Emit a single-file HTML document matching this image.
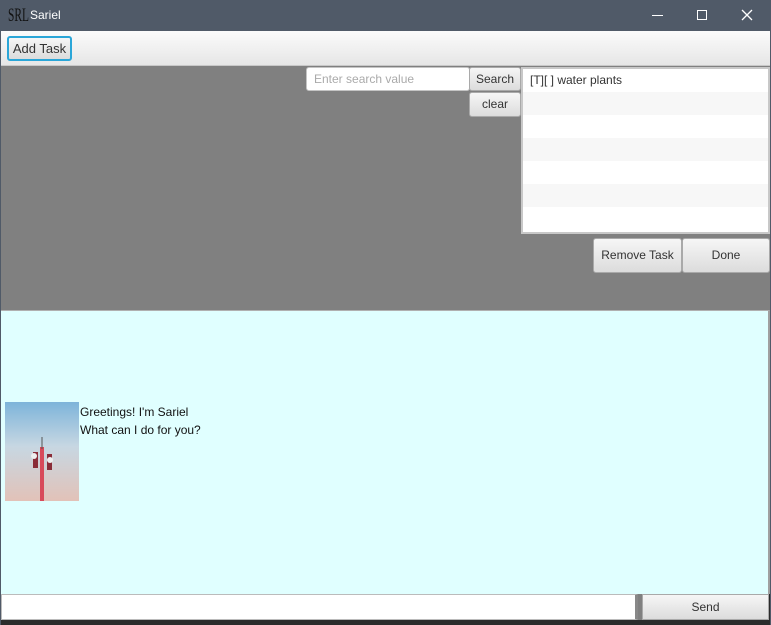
<!DOCTYPE html>
<html><head><style>
*{margin:0;padding:0;box-sizing:border-box}
body{width:771px;height:625px;overflow:hidden;background:#2b2b2b;font-family:"Liberation Sans",sans-serif;font-size:12px;color:#333;position:relative}
.a{position:absolute}
.btn{position:absolute;background:linear-gradient(#f6f6f6,#dcdcdc);border:1px solid #a9a9a9;border-radius:3px;text-align:center;color:#333;font-size:12px}
</style></head><body>
<div class="a" style="left:0;top:0;width:771px;height:31px;background:#505a68"></div>
<div class="a" style="left:8px;top:5px;color:#111;font-family:'Liberation Serif',serif;font-size:19px;transform:scaleX(0.6);transform-origin:left">SRL</div>
<div class="a" style="left:30px;top:8px;color:#fff;font-size:12px">Sariel</div>
<div class="a" style="left:652px;top:15px;width:11px;height:1px;background:#fff"></div>
<div class="a" style="left:697px;top:10px;width:10px;height:10px;border:1px solid #fff"></div>
<svg class="a" style="left:741px;top:9px" width="12" height="12"><path d="M1 1L11 11M11 1L1 11" stroke="#fff" stroke-width="1.3"/></svg>
<div class="a" style="left:0;top:31px;width:771px;height:594px;border-left:1px solid #505a68;border-right:1px solid #505a68"></div>
<div class="a" style="left:1px;top:31px;width:769px;height:35px;background:linear-gradient(#fbfbfb,#e6e6e6);border-bottom:1px solid #c8c8c8"></div>
<div class="btn" style="left:7px;top:36px;width:65px;height:25px;line-height:22px;border:2px solid #2aa6d8;font-size:13px">Add Task</div>
<div class="a" style="left:1px;top:66px;width:769px;height:244px;background:#808080"></div>
<div class="a" style="left:306px;top:67px;width:164px;height:24px;background:#fff;border:1px solid #c4c4c4;border-radius:3px;color:#aaa;padding:4px 7px">Enter search value</div>
<div class="btn" style="left:469px;top:67px;width:52px;height:24px;line-height:22px">Search</div>
<div class="btn" style="left:469px;top:92px;width:52px;height:25px;line-height:23px">clear</div>
<div class="a" style="left:521px;top:67px;width:249px;height:167px;background:#fff;border:2px solid #c8c8c8">
<div style="height:23px;padding:4px 7px;color:#333">[T][ ] water plants</div>
<div style="height:23px;background:#f7f7f7"></div><div style="height:23px"></div>
<div style="height:23px;background:#f7f7f7"></div><div style="height:23px"></div>
<div style="height:23px;background:#f7f7f7"></div>
</div>
<div class="btn" style="left:593px;top:238px;width:89px;height:35px;line-height:33px">Remove Task</div>
<div class="btn" style="left:682px;top:238px;width:88px;height:35px;line-height:33px">Done</div>
<div class="a" style="left:1px;top:310px;width:769px;height:284px;background:#e0ffff;border-top:1px solid #b0b0b0;border-right:2px solid #a0a0a0"></div>
<svg class="a" style="left:5px;top:402px" width="74" height="99">
<defs><linearGradient id="g" x1="0" y1="0" x2="0" y2="1"><stop offset="0" stop-color="#7db4da"/><stop offset="0.45" stop-color="#c7d7e2"/><stop offset="1" stop-color="#e2c2b8"/></linearGradient></defs>
<rect width="74" height="99" fill="url(#g)"/>
<rect x="35" y="45" width="4" height="54" fill="#d84a5a"/>
<rect x="28" y="50" width="5" height="16" fill="#8a2c38"/><rect x="42" y="52" width="5" height="16" fill="#8a2c38"/>
<circle cx="29" cy="54" r="3" fill="#eee"/><circle cx="45" cy="58" r="3" fill="#eee"/>
<rect x="36.5" y="35" width="1" height="12" fill="#555"/>
</svg>
<div class="a" style="left:80px;top:403px;color:#111;font-size:12px;line-height:18px">Greetings! I'm Sariel<br>What can I do for you?</div>
<div class="a" style="left:1px;top:594px;width:637px;height:26px;background:#fff;border:1px solid #bbb;border-right:3px solid #888"></div>
<div class="a" style="left:638px;top:594px;width:4px;height:26px;background:#808080"></div>
<div class="btn" style="left:642px;top:594px;width:127px;height:26px;line-height:24px;border-radius:0">Send</div>
<div class="a" style="left:1px;top:620px;width:769px;height:5px;background:#2b2b2b"></div>
</body></html>
